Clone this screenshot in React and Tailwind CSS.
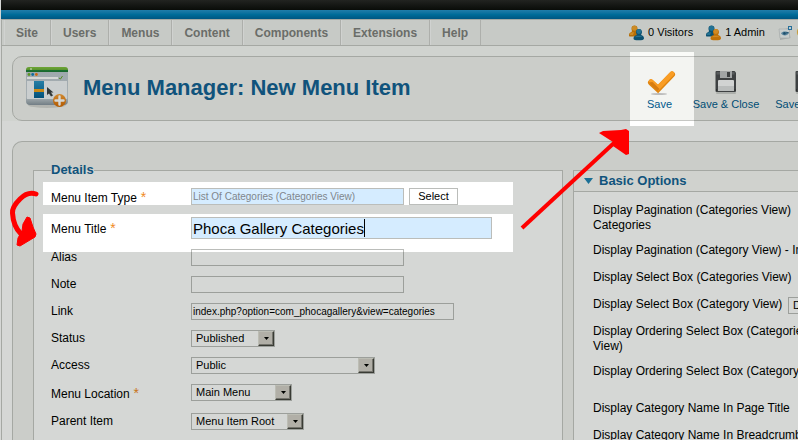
import React from "react";

const menuItems = ["Site", "Users", "Menus", "Content", "Components", "Extensions", "Help"];

const box = "h-[17px] border border-[#bbbdba] bg-transparent";

function People({ back, backDark, front, frontDark }) {
  return (
    <svg width="15" height="16" viewBox="0 0 15 16" className="shrink-0">
      <path d="M0 10.500c0-2 1-3 2.500-3.400L3 6C2.600 5.300 2.500 4.500 2.500 3.500 2.500 1.200 3.800.500 5.500.500s3 .7 3 3L8.500 7 8 11.500H1c-.7 0-1-.4-1-1z" fill={backDark} />
      <circle cx="5.500" cy="3.200" r="2.500" fill={back} />
      <path d="M.8 9C1.800 7.500 3.500 7.300 5 7.300L4 10H1z" fill={back} />
      <path d="M4.500 13.500c0-2 1.300-3 3-3.300L7.800 9.500C7.300 8.800 7 8 7 7c0-1.900 1.300-3 3-3s3 1.100 3 3c0 1-.3 1.800-.8 2.400v.7c1.700.4 2.800 1.500 2.800 3.300 0 1.300-2 1.800-5.300 1.800s-5.200-.2-5.200-1.700z" fill={frontDark} />
      <circle cx="9.900" cy="6.500" r="2.400" fill={front} />
      <path d="M6 12.300c.6-1.200 1.800-1.500 3.200-1.500h1.800c1 0 1.800.3 2.300 1z" fill={front} />
    </svg>
  );
}

function MessageIcon() {
  return (
    <svg width="15" height="16" viewBox="0 0 15 16" className="shrink-0">
      <path d="M1.500 5 11 3l1.500 10-10.500 2z" fill="#c6c9ca" />
      <path d="M1 4h10.500v9H2z" fill="#f0f3f5" stroke="#cdd0d2" strokeWidth=".8" />
      <path d="M3 8.500c1.500-2.500 5.500-2.500 8-.5-1.500 3-6 3.300-8 .5z" fill="#6f9fbd" />
      <circle cx="6.500" cy="8.400" r="1.300" fill="#245d84" />
      <path d="M8 8l2.500-.5" stroke="#245d84" />
      <rect x="10.500" y="1.500" width="3" height="3" fill="#e5f2fb" stroke="#2e83b8" />
    </svg>
  );
}

function MenuAddIcon() {
  return (
    <svg width="48" height="48" viewBox="0 0 48 48" className="shrink-0">
      <defs>
        <linearGradient id="frame" x2="0" y2="1"><stop stopColor="#bcc6cf" /><stop offset=".8" stopColor="#c9d0d6" /><stop offset="1" stopColor="#8995a0" /></linearGradient>
        <linearGradient id="leaf" x2="0" y2="1"><stop stopColor="#86c440" /><stop offset=".5" stopColor="#6fb23a" /><stop offset=".6" stopColor="#23863c" /><stop offset="1" stopColor="#1c7936" /></linearGradient>
        <linearGradient id="sea" x2="0" y2="1"><stop stopColor="#2d95c7" /><stop offset="1" stopColor="#045f92" /></linearGradient>
        <linearGradient id="orb" x2="0" y2="1"><stop stopColor="#f9a13a" /><stop offset="1" stopColor="#d76a00" /></linearGradient>
      </defs>
      <ellipse cx="24" cy="41" rx="19" ry="3" fill="#000" opacity=".12" />
      <rect x="3" y="3" width="42" height="38" rx="4" fill="url(#frame)" />
      <path d="M3 8V6q0-3 3-3h36q3 0 3 3v2z" fill="url(#leaf)" />
      <circle cx="8" cy="5" r="1" fill="#d6efb4" />
      <circle cx="6" cy="10.500" r="1.400" fill="#71b02f" /><circle cx="9.700" cy="10.500" r="1.400" fill="#1580bd" /><circle cx="13.400" cy="10.500" r="1.400" fill="#f17c16" />
      <rect x="4" y="13" width="31" height="2" fill="#fff" />
      <path d="M36 14l1.500 1 2-3" fill="none" stroke="#65a82b" />
      <rect x="4" y="17" width="40" height="18" fill="#f2f5f8" />
      <rect x="11" y="17" width="10" height="17" fill="url(#sea)" />
      <rect x="11" y="25" width="10" height="3" fill="#f4a21c" />
      <path d="M24 23v8l2-1.500 2 3 2-1-2-3h2.500z" fill="#3d4145" />
      <circle cx="36.500" cy="36.500" r="6.500" fill="url(#orb)" />
      <path d="M36.500 32.500v8M32.500 36.500h8" stroke="#fff" strokeWidth="2.400" strokeLinecap="round" />
    </svg>
  );
}

function CheckIcon() {
  return (
    <svg width="32" height="32" viewBox="0 0 32 32" className="shrink-0">
      <ellipse cx="15" cy="28" rx="8" ry="1" fill="#bcbcbc" />
      <path d="M7 16.500 14 23 28 8.500" fill="none" stroke="#e0850f" strokeWidth="6" strokeLinecap="round" />
      <path d="M7 15.500 14 21.800 28 7.700" fill="none" stroke="#f99d25" strokeWidth="4.600" strokeLinecap="round" />
      <path d="M4.500 16.500 13.500 25l2-2-7-7z" fill="#d67c12" />
    </svg>
  );
}

function FloppyIcon() {
  return (
    <svg width="32" height="32" viewBox="0 0 32 32" className="shrink-0">
      <rect x="6" y="26" width="20" height="2" rx="1" fill="#000" opacity=".15" />
      <path d="M5.500 6q0-1 1-1h18l1.500 1.500V25q0 1-1 1h-18.500q-1 0-1-1z" fill="#4b4c50" />
      <path d="M6.500 6h18v2.500h-18z" fill="#696a6e" />
      <rect x="10" y="5" width="12" height="7" fill="#c2c3c6" />
      <rect x="17" y="6" width="3" height="5" fill="#4b4c50" />
      <rect x="8" y="14" width="16" height="11" rx="1" fill="#fbfbfc" />
      <rect x="8" y="20" width="16" height="5" fill="#dfe0e2" />
      <path d="M6.500 23.500v1M25 23.500v1" stroke="#222" />
    </svg>
  );
}

function Picker({ id, value, width }) {
  return (
    <span className={"relative block shrink-0 " + width}>
      <select id={id} defaultValue={value} className={box + " block w-full appearance-none pl-1 text-[11px] leading-[15px] text-black outline-none"}>
        <option>{value}</option>
      </select>
      <span className="pointer-events-none absolute inset-y-px right-px flex w-4 items-center justify-center border border-b-[#45453f] border-l-[#e2e0d8] border-r-[#45453f] border-t-[#e2e0d8] bg-[#d4d0c8] shadow-[inset_-1px_-1px_0_#8c8a84]">
        <svg width="5" height="3" viewBox="0 0 5 3"><path d="M0 0h5L2.500 3z" fill="#000" /></svg>
      </span>
    </span>
  );
}

function Row({ id, label, required, center, children }) {
  return (
    <div className={"flex " + (center ? "items-center" : "items-start")}>
      <label htmlFor={id} className={"w-[140px] shrink-0 leading-[17px] " + (required ? "pt-0.5" : "")}>
        {label}
        {required && <span className="text-sm leading-none text-[#f08a24]"> *</span>}
      </label>
      {children}
    </div>
  );
}

function ToolButton({ label, width, children }) {
  return (
    <button type="button" className={"flex shrink-0 flex-col items-center whitespace-nowrap text-[11px] leading-3 text-[#025a8d] " + width}>
      {children}
      {label}
    </button>
  );
}

const options = [
  { lines: ["Display Pagination (Categories View)", "Categories"] },
  { lines: ["Display Pagination (Category View) - Images"] },
  { lines: ["Display Select Box (Categories View)"] },
  { lines: ["Display Select Box (Category View)"], value: "Display" },
  { lines: ["Display Ordering Select Box (Categories", "View)"] },
  { lines: ["Display Ordering Select Box (Category View)"], tall: true },
  { lines: ["Display Category Name In Page Title"] },
  { lines: ["Display Category Name In Breadcrumbs"] },
];

function Annotations() {
  return (
    <svg width="100%" height="100%" className="pointer-events-none absolute inset-0" aria-hidden="true">
      <path fillRule="evenodd" fill="#000c00" fillOpacity=".165" d="M0 0H4000V3000H0zM630 52V126H694V52zM43 182V205H513V182zM43 214V252H513V214z" />
      <path d="M522 228 614 143" stroke="#f00" strokeWidth="4" fill="none" />
      <path d="M599 133 603 131 621 130 626 129 629 131 629 154 626 155 613 146 613 142z" fill="#f00" />
      <path d="M36 194C30 192 24 195 20 199C15 204 12 208 12.500 213C13 222 16 229 21 234" stroke="#f00" strokeWidth="5" fill="none" strokeLinecap="round" strokeLinejoin="round" />
      <path d="M27 217 30 218 33 227 36 234 35 237 20 246 17 245 18 238 22 231 23 224z" fill="#f00" stroke="#f00" strokeLinejoin="round" />
    </svg>
  );
}

export default function App() {
  return (
    <div className="relative h-screen overflow-hidden bg-white pl-px font-['Liberation_Sans',Arial,sans-serif] text-xs text-black">
      <div className="min-w-[1010px]">
        <div className="h-2.5 bg-linear-to-b from-[#292928] to-[#0c0d0b]" />
        <div className="h-[9px] bg-linear-to-b from-[#2794cb] via-[#007fb8] to-[#00649b]" />

        <div className="border-l border-[#c6c7c4]">
          <nav className="flex h-[27px] items-stretch border-y border-[#c6c7c4] bg-[#eff0ed] pl-0.5">
            {menuItems.map((item) => (
              <a key={item} href="#" className="flex items-center border-r border-[#cfd0cd] px-3 font-bold text-[#7f817e] shadow-[inset_1px_0_0_#fafafa]">
                {item}
              </a>
            ))}
            <div className="ml-[148px] flex items-center gap-[13px] whitespace-nowrap text-[11px]">
              <span className="flex items-center gap-1">
                <People back="#f5a62d" backDark="#d98208" front="#2b86b0" frontDark="#0d5f88" />
                0 Visitors
              </span>
              <span className="flex items-center gap-1">
                <People back="#2b86b0" backDark="#0d5f88" front="#f9a32b" frontDark="#e58509" />
                1 Admin
              </span>
              <span className="flex items-center gap-1">
                <MessageIcon />
                <span className="text-[#f08a24]">0</span>
              </span>
            </div>
          </nav>

          <header className="bg-[#fafbf8] pl-2.5 pt-2.5">
            <div className="flex h-[65px] items-start rounded-[10px] border border-[#c6c7c4] bg-[#f3f4f1] pl-2.5">
              <div className="flex w-[619px] shrink-0 items-center gap-3 pt-[7px]">
                <MenuAddIcon />
                <h1 className="whitespace-nowrap text-[22px] font-bold leading-7 text-[#146295]">Menu Manager: New Menu Item</h1>
              </div>
              <div className="flex gap-[17px] pt-[9px]">
                <ToolButton label="Save" width="w-[35px]"><CheckIcon /></ToolButton>
                <ToolButton label="Save & Close" width="w-16"><FloppyIcon /></ToolButton>
                <ToolButton label="Save & New" width="w-[61px]"><FloppyIcon /></ToolButton>
              </div>
            </div>
          </header>

          <main className="pl-2.5 pt-5">
            <div className="flex items-stretch gap-2.5 rounded-tl-[10px] border-l border-t border-[#c6c7c4] bg-[#f3f4f1] pl-5 pt-5">
              <form className="w-[530px] shrink-0">
                <fieldset className="h-full border border-[#c6c7c4] bg-white pb-8 pl-[17px] pt-2.5">
                  <legend className="text-[13px] font-bold leading-4 text-[#146295]">Details</legend>
                  <div className="flex flex-col gap-2.5">
                    <Row id="type" label="Menu Item Type" required>
                      <div className="flex gap-[5px]">
                        <input id="type" readOnly defaultValue="List Of Categories (Categories View)" className="h-[17px] w-[213px] border border-[#bbbdba] bg-[#d5ecff] px-px text-[10px] text-[#80868c] outline-none" />
                        <button type="button" className="h-[17px] w-[49px] border border-[#bbbdba] bg-white text-[11px] leading-[15px]">Select</button>
                      </div>
                    </Row>
                    <Row id="title" label="Menu Title" required center>
                      <span className="relative block w-[301px]">
                        <input id="title" defaultValue="Phoca Gallery Categories" className="block h-[22px] w-full border border-[#bbbdba] bg-[#d5ecff] px-px text-[15px] outline-none" />
                        <span className="absolute inset-y-0.5 left-[173px] w-px bg-black" />
                      </span>
                    </Row>
                    <Row id="alias" label="Alias">
                      <input id="alias" className={box + " w-[213px] px-px text-[10px] outline-none"} />
                    </Row>
                    <Row id="note" label="Note">
                      <input id="note" className={box + " w-[213px] px-px text-[10px] outline-none"} />
                    </Row>
                    <Row id="link" label="Link">
                      <input id="link" readOnly defaultValue="index.php?option=com_phocagallery&view=categories" className={box + " w-[263px] px-px text-[10px] outline-none"} />
                    </Row>
                    <Row id="status" label="Status"><Picker id="status" value="Published" width="w-[84px]" /></Row>
                    <Row id="access" label="Access"><Picker id="access" value="Public" width="w-[184px]" /></Row>
                    <Row id="location" label="Menu Location" required><Picker id="location" value="Main Menu" width="w-[101px]" /></Row>
                    <Row id="parent" label="Parent Item"><Picker id="parent" value="Menu Item Root" width="w-[113px]" /></Row>
                  </div>
                </fieldset>
              </form>

              <section className="mt-2 flex-1 border border-[#c6c7c4] bg-white">
                <h2 className="flex h-[21px] items-center gap-1.5 border-b border-[#c6c7c4] bg-[#f9faf7] pl-2.5 text-[13px] font-bold text-[#146295]">
                  <svg width="9" height="6" viewBox="0 0 9 6"><path d="M0 0h9L4.500 6z" fill="#2184b4" /></svg>
                  Basic Options
                </h2>
                <div className="flex flex-col gap-2.5 pl-[19px] pt-[11px]">
                  {options.map((o, i) => (
                    <div key={i} className={"flex items-start gap-[5px] whitespace-nowrap leading-[15px] " + (o.tall ? "min-h-[27px]" : "min-h-[17px]")}>
                      {o.value ? (
                        <>
                          <label htmlFor={"option" + i} className="w-[190px]">{o.lines[0]}</label>
                          <Picker id={"option" + i} value={o.value} width="w-[84px]" />
                        </>
                      ) : (
                        <p>{o.lines.map((line) => <span key={line} className="block">{line}</span>)}</p>
                      )}
                    </div>
                  ))}
                </div>
              </section>
            </div>
          </main>
        </div>
      </div>
      <Annotations />
    </div>
  );
}
